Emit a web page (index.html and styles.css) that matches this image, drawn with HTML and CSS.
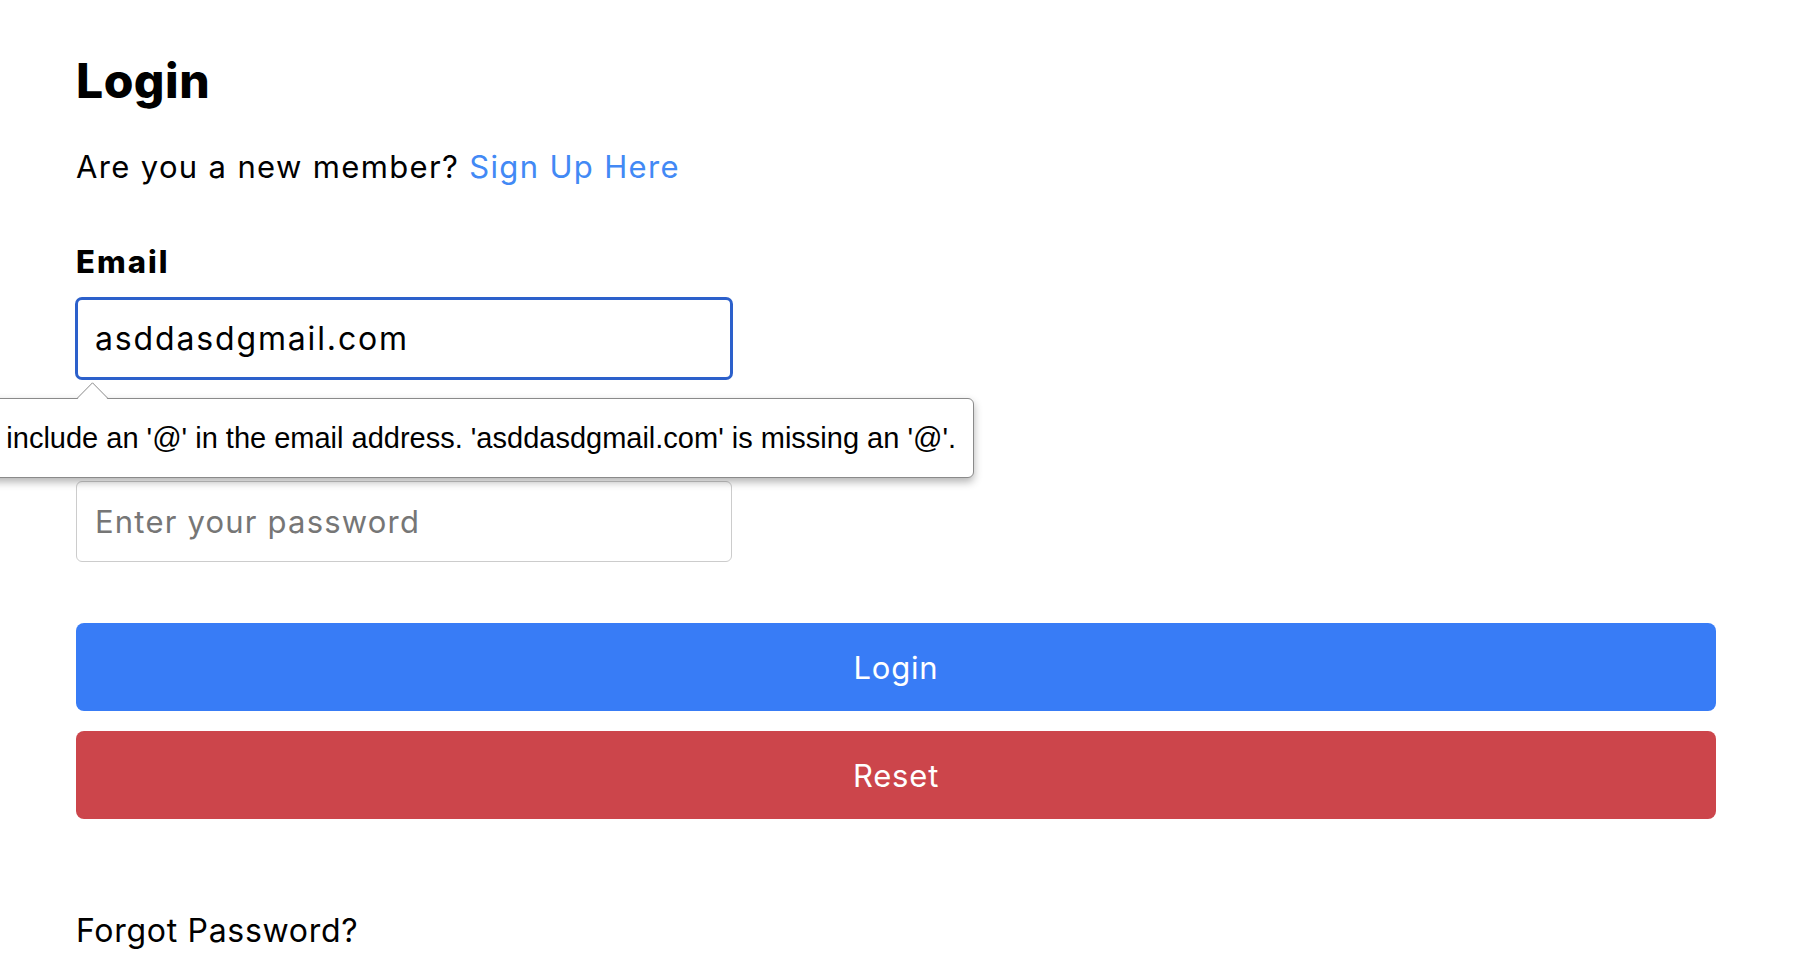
FILE: index.html
```html
<!DOCTYPE html>
<html lang="en">
<head>
<meta charset="utf-8">
<title>Login</title>
<link rel="stylesheet" href="styles.css">
</head>
<body>
<div class="page">
  <h1 class="title">Login</h1>
  <p class="subtitle">Are you a new member? <a class="link" href="#">Sign Up Here</a></p>
  <form class="form">
    <div class="field">
      <label class="label">Email</label>
      <input class="input input--focus" type="text" value="asddasdgmail.com">
    </div>
    <div class="field">
      <label class="label">Password</label>
      <input class="input" type="password" placeholder="Enter your password">
    </div>
    <div class="actions">
      <button class="btn btn--primary" type="button">Login</button>
      <button class="btn btn--danger" type="button">Reset</button>
    </div>
  </form>
  <p class="forgot">Forgot Password?</p>

  <div class="bubble">
    <div class="bubble-box">Please include an '@' in the email address. 'asddasdgmail.com' is missing an '@'.</div>
    <svg class="bubble-arrow" width="33" height="18" viewBox="0 0 33 18">
      <polygon points="0,17.5 15.5,0.8 31,17.5" fill="#ffffff"/>
      <polyline points="0,16.5 15.5,0.8 31,16.5" fill="none" stroke="#8a8a8a" stroke-width="1"/>
    </svg>
  </div>
</div>
</body>
</html>
```
FILE: styles.css
```css
html, body {
  margin: 0;
  padding: 0;
  background: #ffffff;
}
body {
  font-family: Inter, "Open Sans", sans-serif;
  color: #000000;
  overflow: hidden;
}
.page {
  position: relative;
  width: 1812px;
  height: 968px;
  box-sizing: border-box;
  padding: 52px 96px 0 76px;
}
.title {
  margin: 0;
  font-size: 48px;
  line-height: 58px;
  font-weight: 800;
  letter-spacing: 0.5px;
}
.subtitle {
  margin: 39px 0 0;
  font-size: 31px;
  line-height: 36px;
  font-weight: 400;
  letter-spacing: 1.35px;
}
.link {
  color: #4289f5;
  text-decoration: none;
}
.form {
  margin-top: 59px;
  display: flex;
  flex-direction: column;
}
.field {
  display: flex;
  flex-direction: column;
  gap: 18px;
  margin-bottom: 48px;
}
.label {
  font-size: 31px;
  line-height: 36px;
  font-weight: 800;
  letter-spacing: 2px;
}
.input {
  box-sizing: border-box;
  width: 656px;
  height: 81px;
  margin: 0;
  padding: 0 18px;
  border: 1px solid #cccccc;
  border-radius: 6px;
  font-family: Inter, "Open Sans", sans-serif;
  font-size: 31px;
  color: #000000;
  letter-spacing: 1.2px;
  background: #ffffff;
  outline: none;
}
.input::placeholder {
  color: #767676;
}
.input--focus {
  border: 2px solid #2c60cb;
  box-shadow: 0 0 0 1px #2c60cb;
  padding: 0 17px;
  font-size: 32px;
  letter-spacing: 1.85px;
}
.actions {
  margin-top: 13px;
  display: flex;
  flex-direction: column;
  gap: 20px;
}
.btn {
  height: 88px;
  width: 100%;
  border: none;
  border-radius: 8px;
  color: #ffffff;
  font-family: Inter, "Open Sans", sans-serif;
  font-size: 31px;
  font-weight: 400;
  letter-spacing: 0.8px;
  cursor: pointer;
}
.btn--primary {
  background: #387cf6;
}
.btn--danger {
  background: #cc454b;
}
.forgot {
  margin: 93px 0 0;
  font-size: 32px;
  line-height: 38px;
  letter-spacing: 0.7px;
}
.bubble {
  position: absolute;
  top: 382px;
  left: 0;
  width: 974px;
}
.bubble-box {
  margin-top: 16px;
  margin-left: -200px;
  height: 80px;
  box-sizing: border-box;
  border: 1px solid #8a8a8a;
  border-radius: 6px;
  background: #ffffff;
  box-shadow: 0 4px 9px rgba(0, 0, 0, 0.3);
  padding-right: 17px;
  text-align: right;
  white-space: nowrap;
  font-family: "Liberation Sans", Arial, sans-serif;
  font-size: 29px;
  line-height: 78px;
  color: #000000;
}
.bubble-arrow {
  position: absolute;
  top: 0;
  left: 77px;
  display: block;
}
```
